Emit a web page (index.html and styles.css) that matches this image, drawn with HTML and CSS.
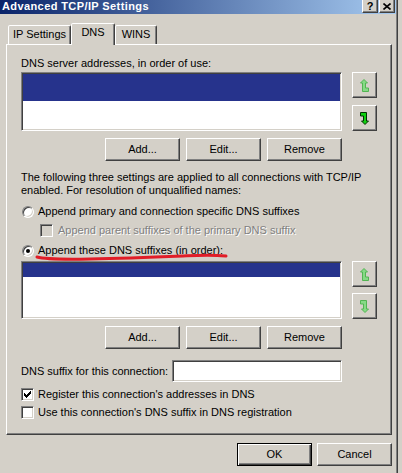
FILE: index.html
```html
<!DOCTYPE html>
<html>
<head>
<meta charset="utf-8">
<title>Advanced TCP/IP Settings</title>
<link rel="stylesheet" href="styles.css">
</head>
<body>
<div class="window">
  <div class="titlebar">
    <span class="title">Advanced TCP/IP Settings</span>
    <div class="caption-btns">
      <span class="cbtn help">?</span>
      <span class="cbtn close"><svg width="8" height="7" viewBox="0 0 8 7"><path d="M0.5 0.5L7.5 6.5M7.5 0.5L0.5 6.5" stroke="#000" stroke-width="1.6" fill="none"/></svg></span>
    </div>
  </div>
  <div class="client">
    <div class="tabs">
      <div class="tab tab-ip">IP Settings</div>
      <div class="tab tab-dns active">DNS</div>
      <div class="tab tab-wins">WINS</div>
    </div>
    <div class="panel">
      <div class="label">DNS server addresses, in order of use:</div>
      <div class="list-row">
        <div class="listbox list-servers"><div class="sel sel-servers"></div></div>
        <div class="arrows">
          <div class="btn arrow"><svg width="9" height="13" viewBox="0 0 9 13"><polygon points="4,0.5 7.5,4 5.5,4 5.5,9 8.5,9 8.5,12.5 2.5,12.5 2.5,4 0.5,4" fill="#86da86" stroke="#52b552" stroke-width="1"/></svg></div>
          <div class="btn arrow"><svg width="9" height="13" viewBox="0 0 9 13"><polygon points="5,12.5 1.5,9 3.5,9 3.5,4 0.5,4 0.5,0.5 6.5,0.5 6.5,9 8.5,9" fill="#10d010" stroke="#003000" stroke-width="1"/></svg></div>
        </div>
      </div>
      <div class="btn-row">
        <div class="btn push">Add...</div>
        <div class="btn push">Edit...</div>
        <div class="btn push">Remove</div>
      </div>
      <p class="info">The following three settings are applied to all connections with TCP/IP<br>enabled. For resolution of unqualified names:</p>
      <div class="option opt-first"><span class="radio"></span><span class="opt-text">Append primary and connection specific DNS suffixes</span></div>
      <div class="option opt-sub"><span class="check check-disabled"></span><span class="opt-text disabled">Append parent suffixes of the primary DNS suffix</span></div>
      <div class="option opt-third"><span class="radio on"></span><span class="opt-text">Append these DNS suffixes (in order):</span></div>
      <div class="list-row list-row-2">
        <div class="listbox list-suffixes"><div class="sel sel-suffixes"></div></div>
        <div class="arrows">
          <div class="btn arrow"><svg width="9" height="13" viewBox="0 0 9 13"><polygon points="4,0.5 7.5,4 5.5,4 5.5,9 8.5,9 8.5,12.5 2.5,12.5 2.5,4 0.5,4" fill="#86da86" stroke="#52b552" stroke-width="1"/></svg></div>
          <div class="btn arrow"><svg width="9" height="13" viewBox="0 0 9 13"><polygon points="5,12.5 1.5,9 3.5,9 3.5,4 0.5,4 0.5,0.5 6.5,0.5 6.5,9 8.5,9" fill="#86da86" stroke="#52b552" stroke-width="1"/></svg></div>
        </div>
      </div>
      <div class="btn-row">
        <div class="btn push">Add...</div>
        <div class="btn push">Edit...</div>
        <div class="btn push">Remove</div>
      </div>
      <div class="suffix-row">
        <span class="suffix-label">DNS suffix for this connection:</span>
        <div class="textbox"></div>
      </div>
      <div class="option opt-reg"><span class="check"><svg width="7" height="7" viewBox="0 0 7 7" shape-rendering="crispEdges"><path d="M6 0h1v1h-1zM5 1h2v1h-2zM0 2h1v1h-1zM4 2h3v1h-3zM0 3h2v1h-2zM3 3h3v1h-3zM0 4h5v1h-5zM1 5h3v1h-3zM2 6h1v1h-1z" fill="#000"/></svg></span><span class="opt-text">Register this connection's addresses in DNS</span></div>
      <div class="option opt-use"><span class="check"></span><span class="opt-text">Use this connection's DNS suffix in DNS registration</span></div>
    </div>
    <div class="dlg-btns">
      <div class="btn push default">OK</div>
      <div class="btn push">Cancel</div>
    </div>
  </div>
  <svg class="scribble" width="198" height="12" viewBox="0 0 198 12"><path d="M3,7 C10,9 30,9.5 56,9 C85,8.5 125,7 149,6 C160,5.5 175,4.5 192,6" fill="none" stroke="#e11d27" stroke-width="3" stroke-linecap="round"/></svg>
</div>
</body>
</html>
```

FILE: styles.css
```css
* { box-sizing: border-box; }

body {
  margin: 0;
  background: #d4d0c8;
  font-family: "Liberation Sans", Arial, sans-serif;
  font-size: 11px;
  color: #000;
}

.window {
  position: relative;
  width: 398px;
  height: 473px;
  background: #d4d0c8;
  border-right: 1px solid #404040;
  box-shadow: inset -1px 0 #808080;
  overflow: hidden;
}

.titlebar {
  display: flex;
  justify-content: space-between;
  align-items: flex-start;
  width: 396px;
  height: 14px;
  background: linear-gradient(to right, #0a246a, #a6caf0);
}

.title {
  color: #fff;
  font-weight: bold;
  line-height: 12px;
  padding-left: 2px;
  letter-spacing: 0.4px;
}

.caption-btns {
  display: flex;
  gap: 1px;
  margin-top: -1px;
  margin-right: 1px;
}

.cbtn {
  width: 16px;
  height: 14px;
  display: flex;
  align-items: center;
  justify-content: center;
  background: #d4d0c8;
  border: 1px solid;
  border-color: #fff #404040 #404040 #fff;
  box-shadow: inset -1px -1px #808080;
  font-weight: bold;
  font-size: 11px;
  line-height: 1;
  padding-top: 1px;
}

.client {
  padding: 9px 0 0 6px;
}

.tabs {
  display: flex;
  align-items: flex-end;
  height: 22px;
  padding-left: 2px;
  margin-bottom: -1px;
  position: relative;
  z-index: 1;
}

.tab {
  height: 19px;
  margin-bottom: 1px;
  border: 1px solid;
  border-bottom: none;
  border-color: #fff #404040 transparent #fff;
  box-shadow: inset -1px 0 #808080;
  border-radius: 2px 2px 0 0;
  background: #d4d0c8;
  text-align: center;
  padding-top: 2px;
  line-height: 13px;
}

.tab-ip { width: 63px; }
.tab-dns { width: 44px; }
.tab-wins { width: 42px; }

.tab.active {
  height: 22px;
  margin-bottom: 0;
}

.panel {
  width: 386px;
  height: 391px;
  border: 1px solid;
  border-color: #fff #404040 #404040 #fff;
  box-shadow: inset -1px -1px #808080;
  padding: 12px 0 0 14px;
}

.label {
  line-height: 13px;
}

.list-row {
  display: flex;
  gap: 10px;
  margin-top: 2px;
}

.list-row-2 {
  margin-top: 4px;
}

.listbox {
  width: 321px;
  background: #fff;
  border: 1px solid;
  border-color: #808080 #fff #fff #808080;
  box-shadow: inset 1px 1px #404040, inset -1px -1px #d4d0c8;
  padding: 1px;
}

.list-servers { height: 59px; }
.list-suffixes { height: 58px; }

.sel { background: #26338c; }
.sel-servers { height: 27px; }
.sel-suffixes { height: 14px; }

.arrows {
  display: flex;
  flex-direction: column;
  justify-content: space-between;
}

.btn {
  background: #d4d0c8;
  border: 1px solid;
  border-color: #fff #404040 #404040 #fff;
  box-shadow: inset -1px -1px #808080;
}

.arrow {
  width: 25px;
  height: 26px;
  display: flex;
  align-items: center;
  justify-content: center;
}

.btn-row {
  display: flex;
  justify-content: flex-end;
  gap: 6px;
  width: 321px;
  margin-top: 7px;
}

.push {
  width: 75px;
  height: 23px;
  display: flex;
  align-items: center;
  justify-content: center;
  line-height: 13px;
}

.info {
  margin: 10px 0 0;
  line-height: 13px;
}

.option {
  display: flex;
  align-items: center;
  height: 13px;
  line-height: 13px;
}

.opt-first { margin-top: 8px; }
.opt-sub { margin-top: 6px; padding-left: 19px; }
.opt-third { margin-top: 7px; }
.opt-reg { margin-top: 6px; }
.opt-use { margin-top: 5px; }

.radio {
  flex: none;
  width: 12px;
  height: 12px;
  margin-left: 1px;
  margin-right: 4px;
  border-radius: 50%;
  background: #fff;
  border: 1px solid;
  border-color: #808080 #fff #fff #808080;
  box-shadow: inset 1px 1px #404040, inset -1px -1px #d4d0c8;
  display: flex;
  align-items: center;
  justify-content: center;
}

.radio.on::after {
  content: "";
  width: 4px;
  height: 4px;
  border-radius: 50%;
  background: #000;
}

.check {
  flex: none;
  width: 13px;
  height: 13px;
  margin-right: 4px;
  background: #fff;
  border: 1px solid;
  border-color: #808080 #fff #fff #808080;
  box-shadow: inset 1px 1px #404040, inset -1px -1px #d4d0c8;
  display: flex;
  align-items: center;
  justify-content: center;
}

.check-disabled {
  background: #d4d0c8;
  margin-right: 5px;
}

.disabled {
  color: #808080;
  text-shadow: 1px 1px 0 #fff;
}

.suffix-row {
  display: flex;
  align-items: center;
  margin-top: 11px;
}

.suffix-label {
  width: 151px;
  line-height: 13px;
}

.textbox {
  width: 170px;
  height: 22px;
  background: #fff;
  border: 1px solid;
  border-color: #808080 #fff #fff #808080;
  box-shadow: inset 1px 1px #404040, inset -1px -1px #d4d0c8;
}

.dlg-btns {
  display: flex;
  justify-content: flex-end;
  gap: 5px;
  width: 386px;
  margin-top: 8px;
}

.push.default {
  border: 1px solid #000;
  box-shadow: inset 1px 1px #fff, inset -1px -1px #404040, inset -2px -2px #808080;
}

.scribble {
  position: absolute;
  left: 34px;
  top: 250px;
  pointer-events: none;
}
```
